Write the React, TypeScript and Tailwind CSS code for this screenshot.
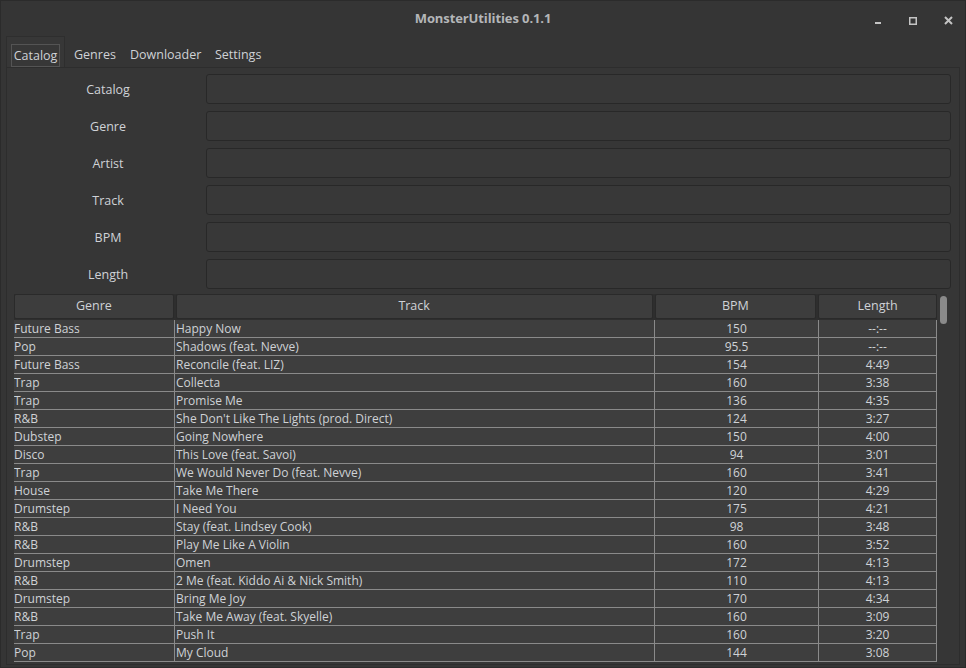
import React from 'react';

const rows: [string, string, string, string][] = [
  ['Future Bass', 'Happy Now', '150', '--:--'],
  ['Pop', 'Shadows (feat. Nevve)', '95.5', '--:--'],
  ['Future Bass', 'Reconcile (feat. LIZ)', '154', '4:49'],
  ['Trap', 'Collecta', '160', '3:38'],
  ['Trap', 'Promise Me', '136', '4:35'],
  ['R&B', "She Don't Like The Lights (prod. Direct)", '124', '3:27'],
  ['Dubstep', 'Going Nowhere', '150', '4:00'],
  ['Disco', 'This Love (feat. Savoi)', '94', '3:01'],
  ['Trap', 'We Would Never Do (feat. Nevve)', '160', '3:41'],
  ['House', 'Take Me There', '120', '4:29'],
  ['Drumstep', 'I Need You', '175', '4:21'],
  ['R&B', 'Stay (feat. Lindsey Cook)', '98', '3:48'],
  ['R&B', 'Play Me Like A Violin', '160', '3:52'],
  ['Drumstep', 'Omen', '172', '4:13'],
  ['R&B', '2 Me (feat. Kiddo Ai & Nick Smith)', '110', '4:13'],
  ['Drumstep', 'Bring Me Joy', '170', '4:34'],
  ['R&B', 'Take Me Away (feat. Skyelle)', '160', '3:09'],
  ['Trap', 'Push It', '160', '3:20'],
  ['Pop', 'My Cloud', '144', '3:08'],
];

const fields = ['Catalog', 'Genre', 'Artist', 'Track', 'BPM', 'Length'];

export default function App() {
  return (
    <div className="w-[966px] h-[668px] bg-[#353535] border border-[#2b2b2b] flex flex-col overflow-hidden text-[12px] text-[#cfd2d6] font-['Open_Sans','Noto_Sans',sans-serif]">
      {/* Title bar */}
      <div className="h-[35px] shrink-0 relative flex items-center justify-center">
        <span className="text-[13px] font-bold text-[#b4b6b8] tracking-[-0.1px]">MonsterUtilities 0.1.1</span>
        <div className="absolute right-[12px] top-[15px] flex items-center gap-[27px]">
          <svg width="8" height="8" viewBox="0 0 8 8"><rect x="1" y="5" width="6" height="2" fill="#c4c4c4" /></svg>
          <svg width="8" height="8" viewBox="0 0 8 8"><rect x="0.5" y="0.5" width="7" height="7" fill="none" stroke="#c4c4c4" strokeWidth="2" /></svg>
          <svg width="9" height="9" viewBox="0 0 9 9"><path d="M1 1 L8 8 M8 1 L1 8" stroke="#c4c4c4" strokeWidth="2" /></svg>
        </div>
      </div>

      {/* Tab widget */}
      <div className="flex-1 flex flex-col px-[5px] pb-[2px] min-h-0">
        <div className="flex items-end h-[31px] shrink-0">
          <div className="h-[31px] w-[59px] border-t border-l border-r border-[#2e2e2e] bg-[#373737] flex items-center justify-center pt-[7px]">
            <span className="border border-[#545454] px-[2px] h-[23px] leading-[21px] text-[12.5px]">Catalog</span>
          </div>
          <span className="ml-[9px] mb-[2px] text-[12.5px] w-[56px]">Genres</span>
          <span className="mb-[2px] text-[12.5px] w-[85px]">Downloader</span>
          <span className="mb-[2px] text-[12.5px]">Settings</span>
        </div>

        <div className="flex-1 min-h-0 border border-[#2d2d2d] bg-[#363636] flex flex-col pl-[7px] pr-[8px] pt-[6px] pb-[2px]">
          {/* Form */}
          <div className="flex flex-col gap-[7px] shrink-0">
            {fields.map((f) => (
              <div key={f} className="flex items-center h-[30px]">
                <div className="w-[192px] pr-[4px] text-center text-[12.5px] pt-[2px]">{f}</div>
                <div className="flex-1 h-[30px] rounded-[3px] border border-[#282828] bg-[#383838]" />
              </div>
            ))}
          </div>

          {/* Table */}
          <div className="mt-[5px] flex-1 min-h-0 flex">
            <div className="w-[927px] flex flex-col min-h-0 overflow-hidden">
              <div className="flex h-[26px] shrink-0 gap-[2px] text-[12.5px] bg-[#2e2e2e] pb-[1px]">
                <div className="w-[160px] rounded-[2px] border border-[#2a2a2a] bg-[#3d3d3d] flex items-center justify-center">Genre</div>
                <div className="w-[478px] rounded-[2px] border border-[#2a2a2a] bg-[#3d3d3d] flex items-center justify-center">Track</div>
                <div className="w-[162px] rounded-[2px] border border-[#2a2a2a] bg-[#3d3d3d] flex items-center justify-center">BPM</div>
                <div className="w-[119px] rounded-[2px] border border-[#2a2a2a] bg-[#3d3d3d] flex items-center justify-center">Length</div>
              </div>
              <div className="flex-1 min-h-0 overflow-hidden bg-[#3e3e3e] border-r border-[#8a8a8a]">
                {rows.map((r, i) => (
                  <div key={i} className="flex h-[18px] border-b border-[#8a8a8a] leading-[18px] text-[12px]">
                    <div className="w-[161px] border-r border-[#8a8a8a] whitespace-nowrap">{r[0]}</div>
                    <div className="w-[480px] pl-[1px] border-r border-[#8a8a8a] whitespace-nowrap">{r[1]}</div>
                    <div className="w-[164px] border-r border-[#8a8a8a] text-center">{r[2]}</div>
                    <div className="flex-1 text-center">{r[3]}</div>
                  </div>
                ))}
              </div>
            </div>
            {/* Scrollbar */}
            <div className="w-[14px] pl-[3px] pt-[2px] shrink-0">
              <div className="w-[7px] h-[28px] rounded-full bg-[#8a8a8a]" />
            </div>
          </div>
        </div>
      </div>
    </div>
  );
}
